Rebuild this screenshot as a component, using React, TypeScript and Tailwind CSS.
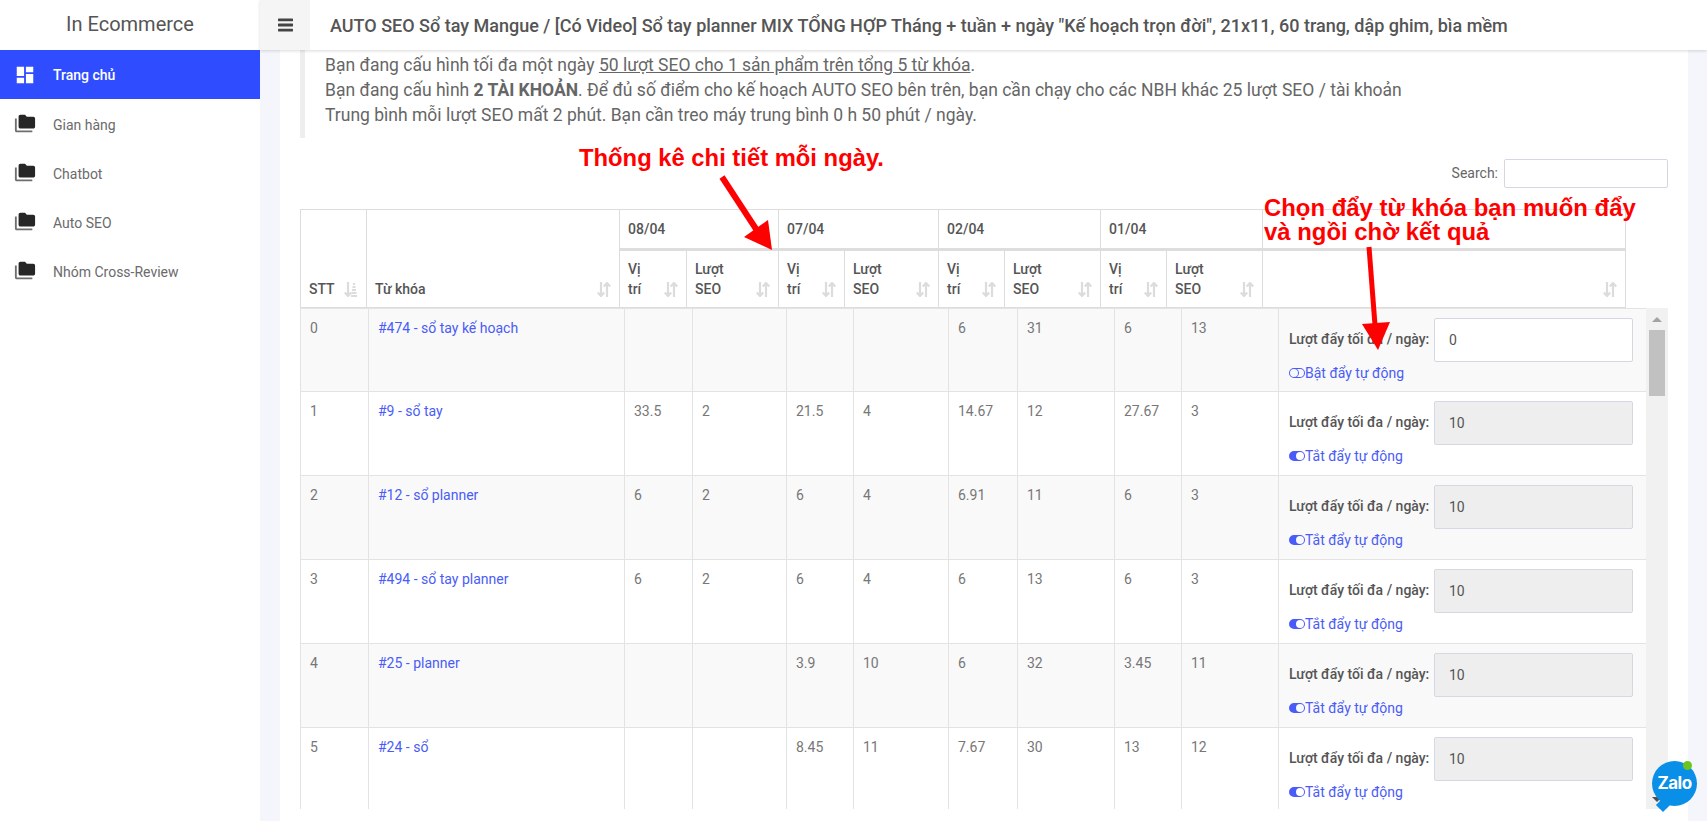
import { BsToggleOff, BsToggleOn } from "react-icons/bs";

const menu = ["Gian hàng", "Chatbot", "Auto SEO", "Nhóm Cross-Review"];

const rows = [
  { id: 0, name: "#474 - sổ tay kế hoạch", cells: ["", "", "", "", "6", "31", "6", "13"], on: false, value: "0" },
  { id: 1, name: "#9 - sổ tay", cells: ["33.5", "2", "21.5", "4", "14.67", "12", "27.67", "3"], on: true, value: "10" },
  { id: 2, name: "#12 - sổ planner", cells: ["6", "2", "6", "4", "6.91", "11", "6", "3"], on: true, value: "10" },
  { id: 3, name: "#494 - sổ tay planner", cells: ["6", "2", "6", "4", "6", "13", "6", "3"], on: true, value: "10" },
  { id: 4, name: "#25 - planner", cells: ["", "", "3.9", "10", "6", "32", "3.45", "11"], on: true, value: "10" },
  { id: 5, name: "#24 - sổ", cells: ["", "", "8.45", "11", "7.67", "30", "13", "12"], on: true, value: "10" },
];

const dates = ["08/04", "07/04", "02/04", "01/04"];

const headWidths = ["w-[66px]", "w-[253px]", "w-[67px]", "w-[92px]", "w-[66px]", "w-[94px]", "w-[66px]", "w-[96px]", "w-[66px]", "w-[96px]", "w-[363px]"];
const bodyWidths = ["w-[68px]", "w-[256px]", "w-[68px]", "w-[94px]", "w-[67px]", "w-[95px]", "w-[69px]", "w-[97px]", "w-[67px]", "w-[97px]", "w-[368px]"];

function FolderIcon() {
  return (
    <svg viewBox="0 0 24 24" className="w-[22px] h-[22px] fill-[#262626] shrink-0 -translate-y-[2px]">
      <path d="M3 6H1v13c0 1.1.9 2 2 2h17v-2H3V6z" fill="#6e6e6e" />
      <path d="M21 4h-7l-2-2H7c-1.1 0-1.99.9-1.99 2L5 15c0 1.1.9 2 2 2h14c1.1 0 2-.9 2-2V6c0-1.1-.9-2-2-2z" />
    </svg>
  );
}

function SortIcon({ asc }: { asc?: boolean }) {
  return (
    <svg viewBox="0 0 14 15" className="absolute right-[8px] bottom-[10px] w-[14px] h-[15px] stroke-[#dcdcdc] fill-none" strokeWidth="2.2">
      <path d="M4 0v14M0.8 10.5L4 14l3.2-3.5" />
      {asc ? <path d="M10 1v2M8.5 5h3M8 8h4M7.5 11h5M7 14h6" /> : <path d="M10 15V1M6.8 4.5L10 1l3.2 3.5" />}
    </svg>
  );
}

function HeadCell({ label, sub, asc }: { label?: string; sub?: string; asc?: boolean }) {
  return (
    <th className="relative border border-[#ddd] px-[8px] pb-[8px] align-bottom text-left leading-[20px] font-medium text-[#555]">
      {label}
      {sub && <br />}
      {sub}
      <SortIcon asc={asc} />
    </th>
  );
}

function rowClass(id: number) {
  if (id === 0) return "h-[83px] bg-[#f9f9f9]";
  return id % 2 === 0 ? "h-[84px] bg-[#f9f9f9]" : "h-[84px] bg-white";
}

function Row({ row }: { row: (typeof rows)[number] }) {
  const cell = "border border-[#e3e3e3] px-[9px] pt-[9px] align-top";
  return (
    <tr className={rowClass(row.id)}>
      <td className={cell}>{row.id}</td>
      <td className={cell}>
        <a className="text-[#4a5cf7]">{row.name}</a>
      </td>
      {row.cells.map((c, i) => (
        <td key={i} className={cell}>
          {c}
        </td>
      ))}
      <td className="border border-[#e3e3e3] pl-[10px] pr-[13px] pt-[9px] align-top">
        <div className="flex items-center justify-between">
          <span className="mb-[2px] font-medium text-[#555]">Lượt đẩy tối đa / ngày:</span>
          <div
            className={
              row.on
                ? "flex items-center w-[199px] h-[44px] pl-[14px] border border-[#d5d8e0] rounded-[2px] bg-[#eeeeee] text-[#555]"
                : "flex items-center w-[199px] h-[44px] pl-[14px] border border-[#d5d8e0] rounded-[2px] bg-white text-[#555]"
            }
          >
            {row.value}
          </div>
        </div>
        <a className="flex items-center mt-[1px] text-[#4a5cf7] leading-[20px]">
          {row.on ? <BsToggleOn className="w-4 h-4" /> : <BsToggleOff className="w-4 h-4" />}
          {row.on ? "Tắt đẩy tự động" : "Bật đẩy tự động"}
        </a>
      </td>
    </tr>
  );
}

export default function App() {
  return (
    <div className="relative flex h-screen overflow-hidden bg-[#f4f6fb] font-['Roboto',sans-serif] text-[14px] text-[#777]">
      <aside className="w-[260px] shrink-0 bg-white">
        <div className="h-[50px] pb-[2px] flex items-center justify-center text-[20px] text-[#555]">In Ecommerce</div>
        <div className="flex items-center h-[49px] pl-[14px] gap-[17px] bg-[#2f4dff] text-white font-medium">
          <svg viewBox="0 0 24 24" className="w-[22px] h-[22px] fill-white shrink-0">
            <path d="M3 13h8V3H3v10zm0 8h8v-6H3v6zm10 0h8V11h-8v10zm0-18v6h8V3h-8z" />
          </svg>
          <span className="pt-[2px]">Trang chủ</span>
        </div>
        <nav className="pt-[2px]">
          {menu.map((m) => (
            <div key={m} className="flex items-center h-[49px] pl-[14px] gap-[17px] text-[#6b6b6b]">
              <FolderIcon />
              {m}
            </div>
          ))}
        </nav>
      </aside>

      <div className="flex-1 min-w-0 flex flex-col">
        <header className="relative z-10 h-[50px] shrink-0 flex items-center bg-white shadow-[0_1px_3px_rgba(0,0,0,0.15)]">
          <div className="w-[50px] h-full flex items-center justify-center bg-[#f5f5f5]">
            <svg viewBox="0 0 16 14" className="w-[15px] h-[14px] fill-[#444]">
              <rect x="0" y="0" width="16" height="3" rx="0.5" />
              <rect x="0" y="5.5" width="16" height="3" rx="0.5" />
              <rect x="0" y="11" width="16" height="3" rx="0.5" />
            </svg>
          </div>
          <h1 className="ml-[20px] text-[18px] font-medium text-[#555] whitespace-nowrap">
            AUTO SEO Sổ tay Mangue / [Có Video] Sổ tay planner MIX TỔNG HỢP Tháng + tuần + ngày "Kế hoạch trọn đời", 21x11, 60 trang, dập ghim, bìa mềm
          </h1>
        </header>

        <main className="flex-1 ml-5 mr-[19px] px-5 bg-white">
          <blockquote className="border-l-[5px] border-[#eeeeee] pl-5 pt-[3px] pb-[10px] text-[17.5px] leading-[25px] text-[#666]">
            <p>
              Bạn đang cấu hình tối đa một ngày <u>50 lượt SEO cho 1 sản phẩm trên tổng 5 từ khóa</u>.
            </p>
            <p>
              Bạn đang cấu hình <b className="font-bold">2 TÀI KHOẢN</b>. Để đủ số điểm cho kế hoạch AUTO SEO bên trên, bạn cần chạy cho các NBH khác 25 lượt SEO / tài khoản
            </p>
            <p>Trung bình mỗi lượt SEO mất 2 phút. Bạn cần treo máy trung bình 0 h 50 phút / ngày.</p>
          </blockquote>

          <div className="flex items-center justify-end gap-[6px] mt-[21px] text-[#666]">
            Search:
            <div className="w-[164px] h-[29px] border border-[#d5d8e0] rounded-[2px] bg-white" />
          </div>

          <table className="table-fixed border-collapse w-[1325px] mt-[21px]">
            <colgroup>
              {headWidths.map((w, i) => (
                <col key={i} className={w} />
              ))}
            </colgroup>
            <thead>
              <tr className="h-[40px] border-b-[3px] border-[#ddd]">
                <th rowSpan={2} className="relative border border-[#ddd] px-[8px] pb-[8px] align-bottom text-left leading-[20px] font-medium text-[#555]">
                  STT
                  <SortIcon asc />
                </th>
                <th rowSpan={2} className="relative border border-[#ddd] px-[8px] pb-[8px] align-bottom text-left leading-[20px] font-medium text-[#555]">
                  Từ khóa
                  <SortIcon />
                </th>
                {dates.map((d) => (
                  <th key={d} colSpan={2} className="border border-[#ddd] pl-[8px] text-left font-medium text-[#555]">
                    {d}
                  </th>
                ))}
                <th className="border border-[#ddd]" />
              </tr>
              <tr className="h-[58px]">
                {dates.flatMap((d) => [<HeadCell key={d + "a"} label="Vị" sub="trí" />, <HeadCell key={d + "b"} label="Lượt" sub="SEO" />])}
                <HeadCell />
              </tr>
            </thead>
          </table>

          <div className="flex h-[501px] overflow-hidden">
            <div className="w-[1346px] shrink-0">
              <table className="table-fixed border-collapse w-[1346px]">
                <colgroup>
                  {bodyWidths.map((w, i) => (
                    <col key={i} className={w} />
                  ))}
                </colgroup>
                <tbody>
                  {rows.map((r) => (
                    <Row key={r.id} row={r} />
                  ))}
                </tbody>
              </table>
            </div>
            <div className="w-[22px] shrink-0 flex flex-col items-center bg-[#f1f1f1]">
              <div className="mt-[9px] w-0 h-0 border-x-[5px] border-x-transparent border-b-[5px] border-b-[#a3a3a3]" />
              <div className="mt-[8px] w-[16px] h-[66px] bg-[#c1c1c1]" />
              <div className="mt-auto mb-[7px] w-0 h-0 border-x-[5px] border-x-transparent border-t-[5px] border-t-[#505050]" />
            </div>
          </div>
        </main>
      </div>

      {/* ghi chú đỏ vẽ đè lên bảng */}
      <div className="absolute left-[579px] top-[143px] text-[23.8px] leading-[30px] font-bold text-[#ff0000] font-['Liberation_Sans',Arial,sans-serif] whitespace-nowrap">
        Thống kê chi tiết mỗi ngày.
      </div>
      <div className="absolute left-[1264px] top-[196px] text-[23.9px] leading-[24px] font-bold text-[#ff0000] font-['Liberation_Sans',Arial,sans-serif] whitespace-nowrap">
        Chọn đẩy từ khóa bạn muốn đẩy
        <br />
        và ngồi chờ kết quả
      </div>
      <svg className="absolute inset-0 w-full h-full pointer-events-none" viewBox="0 0 1707 821">
        <path d="M722 177L758 232" stroke="#ff0000" strokeWidth="6" fill="none" />
        <path d="M772 250L744 237L768 220Z" fill="#ff0000" />
        <path d="M1369 247L1375 325" stroke="#ff0000" strokeWidth="5" fill="none" />
        <path d="M1378 350L1362 324L1390 322Z" fill="#ff0000" />
      </svg>

      {/* nút chat Zalo */}
      <div className="absolute left-[1652px] top-[761px] w-[45px] h-[45px] rounded-full bg-[#0a8fe8] flex items-center justify-center text-white text-[17px] font-bold font-['Inter',sans-serif] tracking-[-0.5px]">
        Zalo
        <div className="absolute -bottom-[4px] left-[6px] w-[10px] h-[10px] bg-[#0a8fe8] rotate-45" />
        <div className="absolute top-0 right-[5px] w-[9px] h-[9px] rounded-full bg-[#6cc51d]" />
      </div>
    </div>
  );
}
